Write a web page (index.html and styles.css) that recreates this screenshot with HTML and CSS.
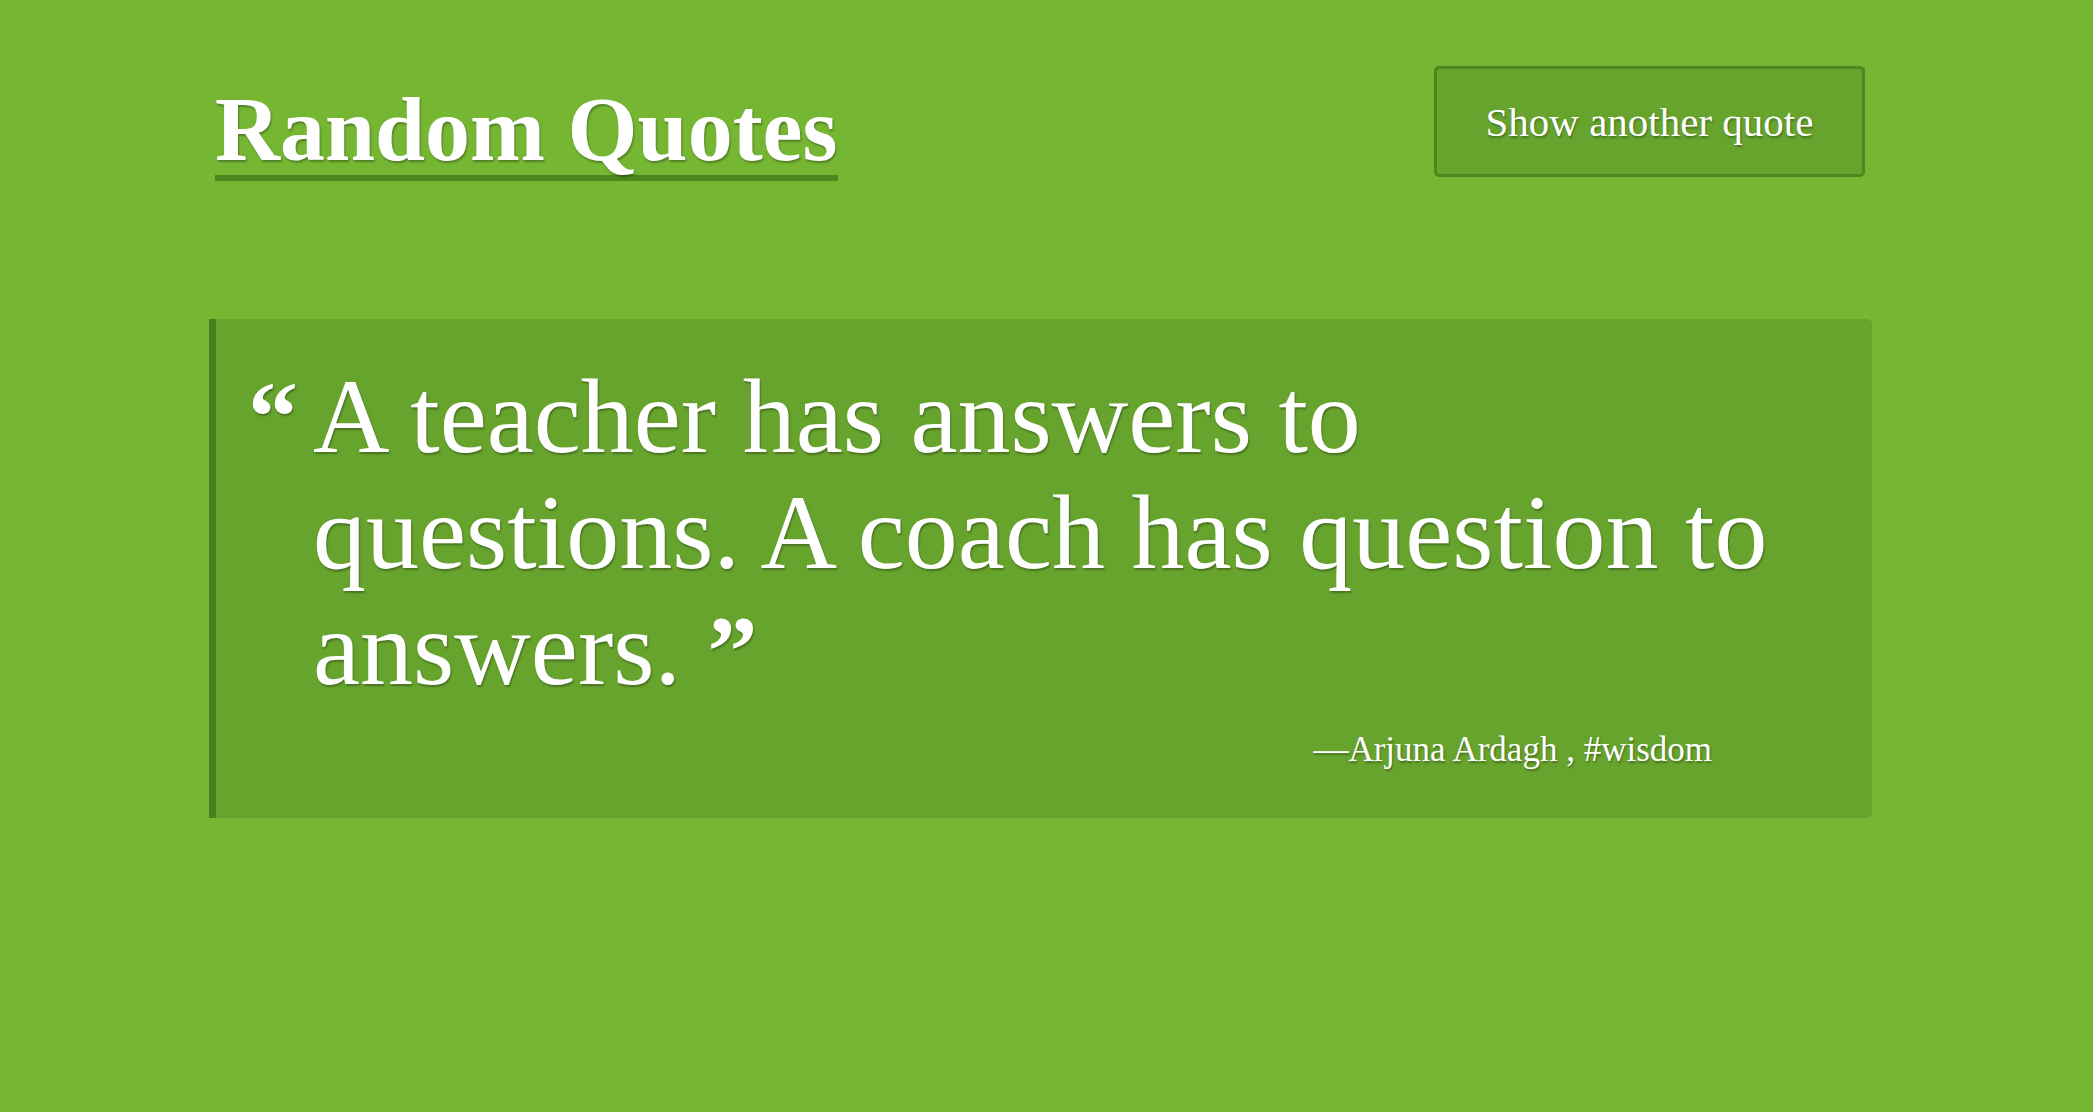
FILE: index.html
```html
<!DOCTYPE html>
<html lang="en">
<head>
<meta charset="utf-8">
<title>Random Quotes</title>
<link rel="stylesheet" href="styles.css">
</head>
<body>
<div class="page">
  <header class="header">
    <h1 class="title"><span class="title-text">Random Quotes</span></h1>
    <button class="new-quote" type="button">Show another quote</button>
  </header>
  <section class="quote-card">
    <div class="quote-row">
      <span class="mark mark-open">“</span>
      <p class="quote-text">A teacher has answers to questions. A coach has question to answers. <span class="mark">”</span></p>
    </div>
    <p class="author">—Arjuna Ardagh , #wisdom</p>
  </section>
</div>
</body>
</html>
```
FILE: styles.css
```css
html, body {
  background: #75b633;
}
body {
  margin: 0;
  font-family: "Liberation Serif", "Times New Roman", serif;
  color: #ffffff;
}
.page {
  width: 1663px;
  margin-left: 209px;
}
.header {
  display: flex;
  justify-content: space-between;
  align-items: flex-start;
  padding: 66px 7px 0 6px;
}
.title {
  margin: 19px 0 0 0;
  font-size: 90px;
  line-height: 1;
  font-weight: 700;
}
.title-text {
  display: inline-block;
  border-bottom: 6px solid #4d8720;
  text-shadow: 1px 2px 2px rgba(0, 0, 0, 0.3);
}
.new-quote {
  width: 431px;
  height: 111px;
  background: #67a42d;
  border: 3px solid #4d8720;
  border-radius: 5px;
  color: #ffffff;
  font-family: inherit;
  font-size: 41px;
  text-shadow: 1px 2px 2px rgba(0, 0, 0, 0.3);
  cursor: pointer;
}
.quote-card {
  margin-top: 138px;
  background: #67a42d;
  border-left: 7px solid #4b7f1d;
  border-radius: 0 5px 5px 0;
  padding: 40px 69px 47px 32px;
  text-shadow: 1px 2px 2px rgba(0, 0, 0, 0.3);
}
.quote-row {
  display: flex;
  align-items: flex-start;
}
.mark {
  font-size: 100px;
  line-height: 90px;
  font-weight: 700;
}
.mark-open {
  flex: 0 0 65px;
  line-height: 116px;
}
.quote-text {
  width: 1490px;
  margin: 0;
  font-size: 106px;
  line-height: 116px;
}
.author {
  margin: 22px 91px 0 0;
  text-align: right;
  font-size: 35px;
  line-height: 42px;
}
```
